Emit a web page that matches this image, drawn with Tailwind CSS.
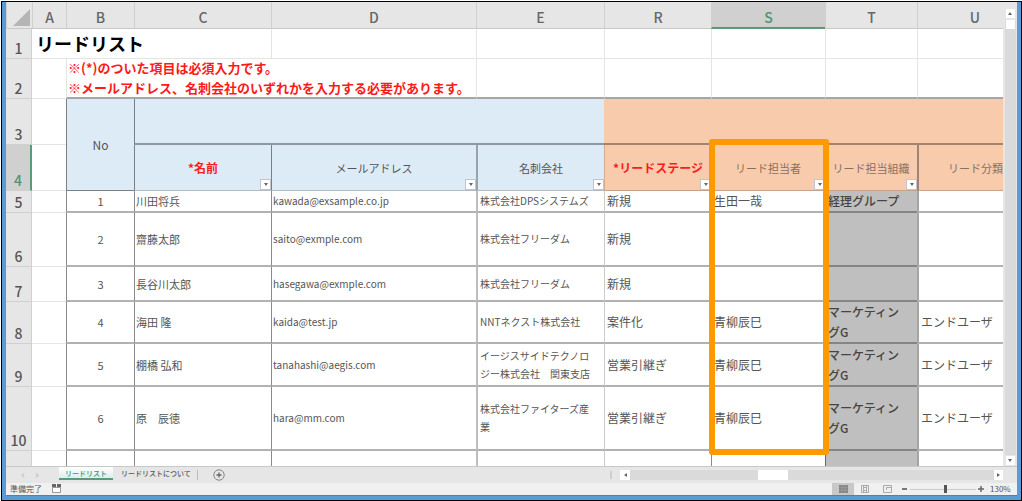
<!DOCTYPE html>
<html lang="ja">
<head>
<meta charset="utf-8">
<title>リードリスト</title>
<script src="https://cdn.jsdelivr.net/npm/@tailwindcss/browser@4"></script>
</head>
<body class="h-screen overflow-hidden bg-white font-['Noto_Sans_CJK_JP',sans-serif] text-[#555]">
<div class="h-screen pl-px pt-px">
<div class="h-full border border-black">
<div class="flex h-full flex-col border-x-4 border-b-4 border-[#5b9bd5] bg-[#e6e6e6]">

  <!-- Sheet and vertical scroll bar -->
  <main class="flex min-h-0 flex-1">
    <div class="relative min-w-0 flex-1 overflow-hidden bg-white">
      <table class="w-[calc(100%+29px)] table-fixed border-separate border-spacing-0 text-left text-[11px] leading-5">
        <colgroup>
          <col class="w-[26px]"><col class="w-[34px]"><col class="w-[68px]"><col class="w-[137px]"><col class="w-[205px]"><col class="w-[128px]"><col class="w-[107px]"><col class="w-[114px]"><col class="w-[92px]"><col>
        </colgroup>
        <thead>
          <tr class="h-[27px] text-center text-[14px] text-[#666] [&>th]:border-b [&>th]:border-b-[#c8c8c8] [&>th]:border-l [&>th]:border-l-[#d0d0d0] [&>th]:bg-[#e6e6e6] [&>th]:pt-1 [&>th]:font-medium">
            <th aria-label="すべて選択"><svg class="ml-auto mr-0.5" width="17" height="17" viewBox="0 0 17 17"><path d="M17 0V17H0Z" fill="#b5b5b5"/></svg></th>
            <th scope="col">A</th><th scope="col">B</th><th scope="col">C</th><th scope="col">D</th><th scope="col">E</th><th scope="col">R</th>
            <th scope="col" class="!border-b-2 !border-b-[#5a9a78] !bg-[#d0d0d0] text-[#4f9472]">S</th>
            <th scope="col">T</th><th scope="col">U</th>
          </tr>
        </thead>
        <tbody class="[&>tr>th:first-child]:border-b [&>tr>th:first-child]:border-r [&>tr>th:first-child]:border-[#d0d0d0] [&>tr>th:first-child]:bg-[#e6e6e6] [&>tr>th:first-child]:text-center [&>tr>th:first-child]:align-bottom [&>tr>th:first-child]:text-[14px] [&>tr>th:first-child]:font-medium">
          <tr class="h-[30px] [&>td]:border-b [&>td]:border-l [&>td]:border-[#e4e4e4]">
            <th scope="row">1</th>
            <td colspan="3" class="!border-l-0 pb-0.5 pl-1 text-[18px] font-bold text-black"><h1>リードリスト</h1></td>
            <td></td><td></td><td></td><td></td><td></td><td></td>
          </tr>
          <tr class="h-[40px] [&>td]:border-l [&>td]:border-l-[#e4e4e4]">
            <th scope="row">2</th>
            <td class="border-b border-b-[#e4e4e4] !border-l-0"></td>
            <td colspan="3" class="border-b-2 border-b-black/35 pl-px text-[13px] font-bold text-[#ff1a1a]"><div class="-my-1">※(*)のついた項目は必須入力です。<br>※メールアドレス、名刺会社のいずれかを入力する必要があります。</div></td>
            <td class="border-b-2 border-b-black/35"></td><td class="border-b-2 border-b-black/35"></td><td class="border-b-2 border-b-black/35"></td><td class="border-b-2 border-b-black/35"></td><td class="border-b-2 border-b-black/35"></td>
          </tr>
          <tr class="h-[46px]">
            <th scope="row">3</th>
            <td class="border-b border-[#e4e4e4]"></td>
            <th scope="col" rowspan="2" class="border-b border-l border-black/45 bg-[#ddebf7] text-center text-[12px] font-normal">No</th>
            <td colspan="3" class="border-b-2 border-l border-b-black/35 border-l-black/45 bg-[#ddebf7]"></td>
            <td colspan="4" class="border-b-2 border-black/35 bg-[#f8cbad]"></td>
          </tr>
          <tr class="h-[46px] text-center text-[11px] [&>th]:relative [&>th]:font-normal [&>th:not(:first-child)]:border-b [&>th:not(:first-child)]:border-b-black/20 [&_button]:absolute [&_button]:bottom-0 [&_button]:right-0 [&_button]:flex [&_button]:size-[11px] [&_button]:items-center [&_button]:justify-center [&_button]:border [&_button]:border-[#c4c4cc] [&_button]:bg-white">
            <th scope="row" class="!border-r-2 !border-r-[#5a9a78] !bg-[#d0d0d0] text-[#4f9472]">4</th>
            <td class="border-b border-[#e4e4e4]"></td>
            <th scope="col" class="border-l border-l-black/45 bg-[#ddebf7]"><span class="text-[12px] font-bold text-[#ff1a1a]">*名前</span><button aria-label="名前で絞り込み"><svg width="4" height="3" viewBox="0 0 4 3"><path d="M0 0H4L2 3Z" fill="#666"/></svg></button></th>
            <th scope="col" class="border-l border-l-black/45 bg-[#ddebf7]">メールアドレス<button aria-label="メールアドレスで絞り込み"><svg width="4" height="3" viewBox="0 0 4 3"><path d="M0 0H4L2 3Z" fill="#666"/></svg></button></th>
            <th scope="col" class="border-l-2 border-l-black/30 bg-[#ddebf7]">名刺会社<button aria-label="名刺会社で絞り込み"><svg width="4" height="3" viewBox="0 0 4 3"><path d="M0 0H4L2 3Z" fill="#666"/></svg></button></th>
            <th scope="col" class="border-l border-l-black/15 bg-[#f8cbad]"><span class="text-[12px] font-bold text-[#ff1a1a]">*リードステージ</span><button aria-label="リードステージで絞り込み"><svg width="4" height="3" viewBox="0 0 4 3"><path d="M0 0H4L2 3Z" fill="#666"/></svg></button></th>
            <th scope="col" class="bg-[#f8cbad] text-[#87705f]">リード担当者<button aria-label="リード担当者で絞り込み"><svg width="4" height="3" viewBox="0 0 4 3"><path d="M0 0H4L2 3Z" fill="#666"/></svg></button></th>
            <th scope="col" class="bg-[#f8cbad] text-[#87705f]">リード担当組織<button aria-label="リード担当組織で絞り込み"><svg width="4" height="3" viewBox="0 0 4 3"><path d="M0 0H4L2 3Z" fill="#666"/></svg></button></th>
            <th scope="col" class="border-l-2 border-l-black/35 bg-[#f8cbad] text-[#87705f]">リード分類</th>
          </tr>
        </tbody>
        <tbody class="[&>tr>th]:border-b [&>tr>th]:border-r [&>tr>th]:border-[#d0d0d0] [&>tr>th]:bg-[#e6e6e6] [&>tr>th]:text-center [&>tr>th]:align-bottom [&>tr>th]:text-[14px] [&>tr>th]:font-medium [&>tr>td]:border-b-2 [&>tr>td]:border-l [&>tr>td]:border-b-black/30 [&>tr>td]:border-l-black/45 [&>tr>td:nth-child(2)]:border-b [&>tr>td:nth-child(2)]:border-l-0 [&>tr>td:nth-child(2)]:border-b-black/10 [&>tr>td:nth-child(3)]:text-center [&>tr>td:nth-child(4)]:pl-px [&>tr>td:nth-child(5)]:pl-px [&>tr>td:nth-child(5)]:text-[10px] [&>tr>td:nth-child(6)]:border-l-2 [&>tr>td:nth-child(6)]:border-l-black/25 [&>tr>td:nth-child(6)]:pl-0.5 [&>tr>td:nth-child(6)]:text-[10px] [&>tr>td:nth-child(6)]:leading-[18px] [&>tr>td:nth-child(7)]:border-l-black/20 [&>tr>td:nth-child(n+7)]:pl-0.5 [&>tr>td:nth-child(n+7)]:text-[12px] [&>tr>td:nth-child(9)]:bg-[#bfbfbf] [&>tr>td:nth-child(9)]:font-medium [&>tr>td:nth-child(9)]:text-[#444] [&>tr>td:nth-child(10)]:border-l-2 [&>tr>td:nth-child(10)]:border-l-black/35">
          <tr class="h-[22px]"><th scope="row">5</th><td></td><td>1</td><td>川田将兵</td><td>kawada@exsample.co.jp</td><td>株式会社DPSシステムズ</td><td>新規</td><td>生田一哉</td><td>経理グループ</td><td></td></tr>
          <tr class="h-[54px]"><th scope="row">6</th><td></td><td>2</td><td>齋藤太郎</td><td>saito@exmple.com</td><td>株式会社フリーダム</td><td>新規</td><td></td><td></td><td></td></tr>
          <tr class="h-[35px]"><th scope="row">7</th><td></td><td>3</td><td>長谷川太郎</td><td>hasegawa@exmple.com</td><td>株式会社フリーダム</td><td>新規</td><td></td><td></td><td></td></tr>
          <tr class="h-[42px]"><th scope="row">8</th><td></td><td>4</td><td>海田 隆</td><td>kaida@test.jp</td><td>NNTネクスト株式会社</td><td>案件化</td><td>青柳辰巳</td><td>マーケティン<br>グG</td><td>エンドユーザ</td></tr>
          <tr class="h-[43px]"><th scope="row">9</th><td></td><td>5</td><td>棚橋 弘和</td><td>tanahashi@aegis.com</td><td>イージスサイドテクノロ<br>ジー株式会社　関東支店</td><td>営業引継ぎ</td><td>青柳辰巳</td><td>マーケティン<br>グG</td><td>エンドユーザ</td></tr>
          <tr class="h-[64px]"><th scope="row">10</th><td></td><td>6</td><td>原　辰徳</td><td>hara@mm.com</td><td>株式会社ファイターズ産<br>業</td><td>営業引継ぎ</td><td>青柳辰巳</td><td>マーケティン<br>グG</td><td>エンドユーザ</td></tr>
          <tr class="h-[40px]"><th scope="row"></th><td></td><td></td><td></td><td></td><td></td><td></td><td></td><td></td><td></td></tr>
        </tbody>
      </table>
      <!-- Highlight around column S -->
      <div class="pointer-events-none absolute left-[703px] top-[137px] h-[316px] w-[120px] rounded-[3px] border-6 border-[#ff9900]"></div>
    </div>

    <div class="flex w-[14px] flex-col items-center bg-[#e6e6e6] pt-[7px]">
      <button aria-label="上へ" class="flex size-[9px] items-center justify-center bg-white"><svg width="4" height="3" viewBox="0 0 4 3"><path d="M0 3H4L2 0Z" fill="#666"/></svg></button>
      <div class="mt-0.5 flex w-[11px] flex-1 flex-col items-center bg-[#dadada]"><div class="h-[9px] w-[9px] bg-white"></div></div>
      <button aria-label="下へ" class="my-px flex size-[9px] items-center justify-center bg-white"><svg width="4" height="3" viewBox="0 0 4 3"><path d="M0 0H4L2 3Z" fill="#666"/></svg></button>
    </div>
  </main>

  <!-- Sheet tabs and horizontal scroll bar -->
  <nav class="flex h-[17px] items-stretch border-t border-[#c8c8c8] pr-[14px] text-[7px] leading-3">
    <div class="flex w-[53px] items-center gap-[10px] pl-[15px]">
      <button aria-label="前のシート"><svg width="4" height="5" viewBox="0 0 4 5"><path d="M3 .5 1 2.500 3 4.500" fill="none" stroke="#aaa"/></svg></button>
      <button aria-label="次のシート"><svg width="4" height="5" viewBox="0 0 4 5"><path d="M1 .5 3 2.500 1 4.500" fill="none" stroke="#aaa"/></svg></button>
    </div>
    <button class="mb-[3px] w-[54px] border-b-2 border-[#5a9a78] bg-linear-to-b from-white to-[#deedf0] pb-px font-medium text-[#35946a]">リードリスト</button>
    <button class="mb-[3px] ml-2 w-[72px] pb-[3px] text-left font-medium">リードリストについて</button>
    <div class="my-[3px] ml-1 border-l border-[#bbb]"></div>
    <button aria-label="新しいシート" class="ml-[15px]"><svg width="12" height="12" viewBox="0 0 12 12" fill="none" stroke="#858585"><circle cx="6" cy="6" r="5.200"/><path d="M3.500 6H8.500M6 3.500V8.500" stroke="#666" stroke-width="1.300"/></svg></button>
    <div class="flex-1"></div>
    <div class="my-1 mr-2 w-0.5 bg-[#cfcfcf]"></div>
    <div class="my-[3px] flex w-[383px] bg-[#dadada]">
      <button aria-label="左へ" class="flex w-[10px] items-center justify-center bg-white"><svg width="3" height="4" viewBox="0 0 3 4"><path d="M3 0V4L0 2Z" fill="#666"/></svg></button>
      <div class="ml-[128px] w-[30px] bg-white"></div>
      <button aria-label="右へ" class="ml-auto flex w-[9px] items-center justify-center bg-white"><svg width="3" height="4" viewBox="0 0 3 4"><path d="M0 0V4L3 2Z" fill="#666"/></svg></button>
    </div>
  </nav>

  <!-- Status bar -->
  <footer class="flex h-[13px] items-stretch border-b border-[#777] bg-[#f0f0f0] pl-1 pr-1 text-[8px] leading-3">
    <span>準備完了</span>
    <svg class="ml-[10px] mt-px" width="9" height="9" viewBox="0 0 9 9"><path d="M.5 3.500H8.500V8.500H.5Z" fill="#fff" stroke="#999"/><path d="M0 1.500H9" stroke="#666" stroke-width="3" stroke-dasharray="4 1"/></svg>
    <div class="flex-1"></div>
    <button aria-label="標準" class="flex w-[22px] items-center justify-center bg-[#c8c8c8]"><svg width="9" height="8" viewBox="0 0 9 8"><path d="M0 0H9V8H0Z" fill="#858585"/><path d="M0 2.700H9M0 5.300H9M3 0V8M6 0V8" stroke="#aaa" stroke-width=".5"/></svg></button>
    <button aria-label="ページレイアウト" class="flex w-[22px] items-center justify-center"><svg width="8" height="8" viewBox="0 0 8 8" fill="none" stroke="#aaa"><path d="M.5 .5H7.500V7.500H.5ZM2.500 2.500H5.500V5.500H2.500ZM2.500 0V8M5.500 0V8"/></svg></button>
    <button aria-label="改ページ プレビュー" class="flex w-[22px] items-center justify-center"><svg width="9" height="8" viewBox="0 0 9 8" fill="none" stroke="#aaa"><path d="M.5 .5H8.500V7.500H.5ZM3.500 2.500H8M3.500 2.500V5"/></svg></button>
    <button aria-label="縮小" class="ml-1 flex w-[8px] items-center"><svg width="5" height="2" viewBox="0 0 5 2"><path d="M0 0H5V2H0Z" fill="#777"/></svg></button>
    <input type="range" aria-label="ズーム" min="10" max="190" value="108" class="h-3 w-[66px] appearance-none bg-transparent bg-[linear-gradient(#ccc,#ccc)] bg-[length:100%_1px] bg-center bg-no-repeat [&::-webkit-slider-thumb]:h-2 [&::-webkit-slider-thumb]:w-[3px] [&::-webkit-slider-thumb]:appearance-none [&::-webkit-slider-thumb]:bg-[#555]">
    <button aria-label="拡大" class="ml-0.5 flex w-[12px] items-center"><svg width="6" height="6" viewBox="0 0 6 6"><path d="M0 3H6M3 0V6" stroke="#666" stroke-width="1.500"/></svg></button>
    <span class="w-[23px]">130%</span>
  </footer>

</div>
</div>
</div>
</body>
</html>
